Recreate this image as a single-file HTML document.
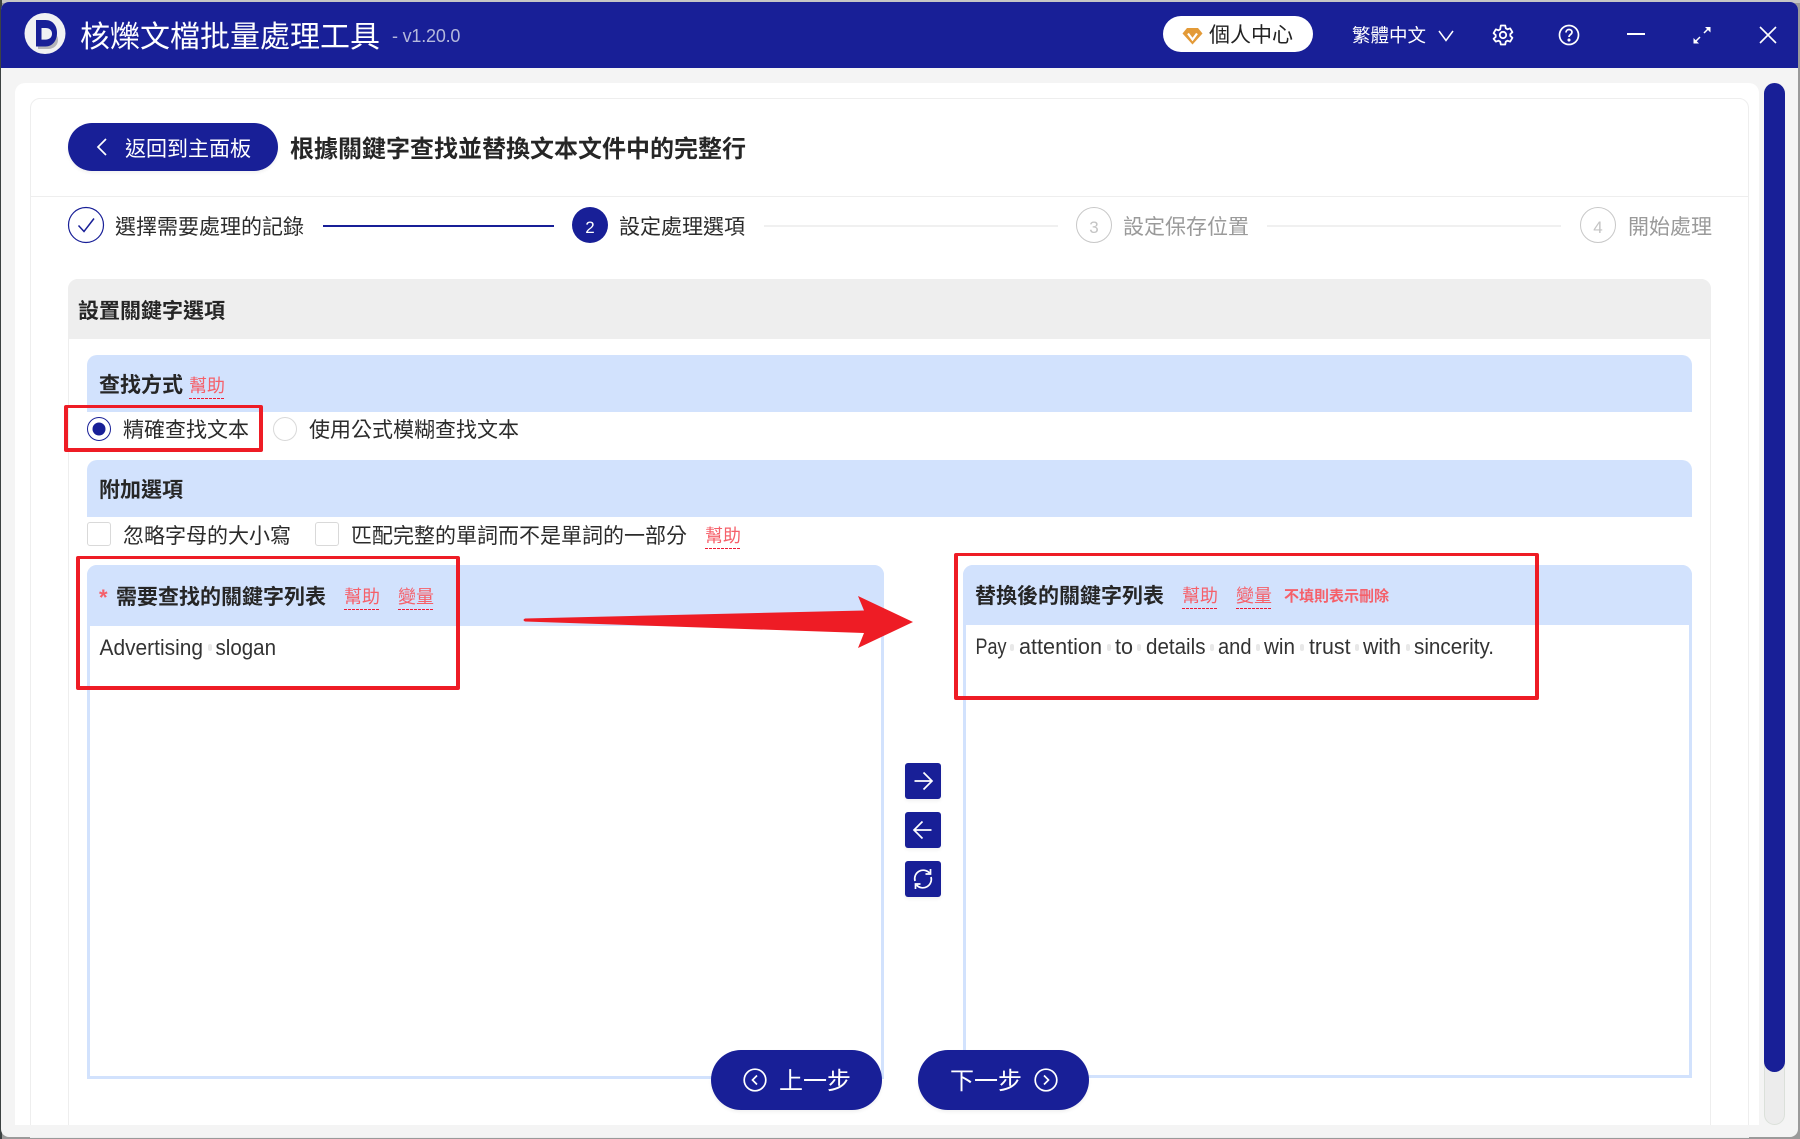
<!DOCTYPE html>
<html lang="zh-Hant"><head><meta charset="utf-8"><title>核爍文檔批量處理工具</title>
<style>
*{box-sizing:border-box}
html,body{margin:0;padding:0;width:1800px;height:1139px;overflow:hidden;background:#9a9a9a;font-family:"Liberation Sans","Noto Sans CJK TC",sans-serif}
.a{position:absolute}
.t{position:absolute;white-space:nowrap;line-height:30px;height:30px;font-size:21px;color:#2b2b2b;margin-top:2px}
.b{font-weight:700;color:#262626}
.h{position:absolute;white-space:nowrap;line-height:30px;height:30px;font-size:18px;color:#f5606a}
.u{position:absolute;height:1px;width:36px;background:repeating-linear-gradient(90deg,#ee1c35 0 3px,transparent 3px 4px)}
.blue{position:absolute;background:#d2e2fd}
.rb{position:absolute;border-style:solid;border-color:#ee1c25;border-width:3px 4px 4px;border-radius:2px}
.sq{position:absolute;left:905px;width:36px;height:36px;background:#181f97;border-radius:3px;box-shadow:0 2px 3px rgba(0,0,0,.06)}
.gr{color:#9a9a9a}
.d{position:absolute;width:4px;height:7px;border-radius:2px;background:#e8e8e8}
</style></head><body>
<div class="a" style="left:0;top:0;width:1800px;height:3px;background:#c6c6c6"></div>
<div class="a" style="left:0;top:0;width:2px;height:1139px;background:#3c4242"></div>
<div class="a" style="left:1px;top:2px;width:1797px;height:1135px;background:#f4f4f4;border-radius:8px;overflow:hidden">
 <div class="a" style="left:0;top:0;width:1797px;height:66px;background:#181f97"></div>
</div>

<!-- title bar -->
<svg class="a" style="left:24px;top:13px" width="42" height="41" viewBox="0 0 42 41">
 <circle cx="21" cy="20.500" r="20.500" fill="#f1f1f3"/>
 <path d="M14 18h10c6 0 10 4 10 9s-4 9-10 9H14z" fill="#b4b4b8"/>
 <path d="M12 7h9.500c7 0 11.500 5.500 11.500 13s-4.500 13.500-11.500 13.500H12z" fill="#181f97"/>
 <path d="M17.500 15h4c4 0 6.500 2.300 6.500 5.800s-2.500 5.800-6.500 5.800h-4z" fill="#f1f1f3"/>
</svg>
<div class="t" style="left:80px;top:21px;font-size:30px;color:#fff">核爍文檔批量處理工具</div>
<div class="t" style="left:392px;top:21px;font-size:18px;color:#b5b9dc;margin-top:0;letter-spacing:-.2px">- v1.20.0</div>

<div class="a" style="left:1163px;top:16px;width:150px;height:36px;background:#fff;border-radius:18px"></div>
<svg class="a" style="left:1182px;top:27px" width="21" height="18" viewBox="0 0 21 18">
 <path d="M5 1h11l4.500 5.500L10.500 17.500.5 6.500z" fill="#e39a37"/>
 <path d="M6 6.500l4.500 6 4.500-6" fill="none" stroke="#fff" stroke-width="2.200"/>
</svg>
<div class="t" style="left:1209px;top:20px;color:#222;margin-top:1px">個人中心</div>
<div class="t" style="left:1352px;top:20px;font-size:18.500px;color:#fff;margin-top:1px">繁體中文</div>
<svg class="a" style="left:1437px;top:29px" width="18" height="14" viewBox="0 0 18 14"><path d="M2 2l7 9.500L16 2" fill="none" stroke="#fff" stroke-width="1.500"/></svg>
<svg class="a" style="left:1492px;top:24px" width="22" height="22" viewBox="0 0 22 22" fill="none" stroke="#fff" stroke-width="1.800">
 <path d="M8.800 1.500h4.400l.6 2.800 1.700 1 2.700-.9 2.200 3.800-2.100 1.900v1.800l2.100 1.900-2.200 3.800-2.700-.9-1.700 1-.6 2.800H8.800l-.6-2.800-1.700-1-2.700.9L1.600 14.800l2.100-1.900v-1.800L1.600 9.200l2.200-3.800 2.700.9 1.700-1z" stroke-linejoin="round"/>
 <circle cx="11" cy="11" r="3.200"/>
</svg>
<svg class="a" style="left:1558px;top:24px" width="22" height="22" viewBox="0 0 22 22" fill="none" stroke="#fff" stroke-width="1.700">
 <circle cx="11" cy="11" r="9.500"/>
 <path d="M8 8.500c0-1.800 1.300-3 3-3s3 1.200 3 2.800c0 2.300-3 2.300-3 4.700"/>
 <circle cx="11" cy="16" r=".7" fill="#fff"/>
</svg>
<div class="a" style="left:1627px;top:33px;width:18px;height:2px;background:#fff"></div>
<svg class="a" style="left:1692px;top:25px" width="20" height="20" viewBox="0 0 20 20" fill="none" stroke="#fff" stroke-width="1.500">
 <path d="M12 8l5.500-5.500M8 12l-5.500 5.500"/>
 <path d="M13 2h5.500v5.500z" fill="#fff" stroke="none"/>
 <path d="M7 18.500H1.500V13z" fill="#fff" stroke="none"/>
</svg>
<svg class="a" style="left:1758px;top:25px" width="20" height="20" viewBox="0 0 20 20" fill="none" stroke="#fff" stroke-width="1.600"><path d="M2 2l16 16M18 2L2 18"/></svg>

<!-- main panel -->
<div class="a" style="left:15px;top:83px;width:1744px;height:1042px;background:#fff;border-radius:10px 10px 0 0"></div>
<div class="a" style="left:30px;top:98px;width:1719px;height:1040px;border:1px solid #eeeeee;border-radius:10px 10px 0 0"></div>
<div class="a" style="left:15px;top:1125px;width:1770px;height:12px;background:#f4f4f4"></div>
<div class="a" style="left:30px;top:196px;width:1719px;height:1px;background:#eeeeee"></div>

<!-- scrollbar -->
<div class="a" style="left:1764px;top:83px;width:21px;height:1042px;background:#ececec;border:1px solid #dbe0da;border-radius:11px"></div>
<div class="a" style="left:1764px;top:83px;width:21px;height:989px;background:#181f97;border-radius:11px"></div>

<!-- head -->
<div class="a" style="left:68px;top:123px;width:210px;height:48px;background:#181f97;border-radius:24px;box-shadow:0 2px 3px rgba(0,0,0,.06)"></div>
<svg class="a" style="left:94px;top:136px" width="16" height="22" viewBox="0 0 16 22"><path d="M12 3L4 11l8 8" fill="none" stroke="#fff" stroke-width="1.700"/></svg>
<div class="t" style="left:125px;top:134px;color:#fff;margin-top:1px">返回到主面板</div>
<div class="t b" style="left:290px;top:133px;font-size:24px">根據關鍵字查找並替換文本文件中的完整行</div>

<!-- steps -->
<svg class="a" style="left:67px;top:206px" width="38" height="38" viewBox="0 0 38 38" fill="none"><circle cx="19" cy="19" r="17.500" stroke="#181f97" stroke-width="1.200"/><path d="M11.500 19.500l5.500 6 10-13" stroke="#181f97" stroke-width="1.500"/></svg>
<div class="t" style="left:115px;top:211px">選擇需要處理的記錄</div>
<div class="a" style="left:323px;top:225px;width:231px;height:2px;background:#181f97"></div>
<div class="a" style="left:572px;top:207px;width:36px;height:36px;border-radius:50%;background:#181f97"></div>
<div class="t" style="left:572px;top:211px;width:36px;text-align:center;font-size:17px;color:#fff">2</div>
<div class="t" style="left:619px;top:211px">設定處理選項</div>
<div class="a" style="left:764px;top:225px;width:294px;height:2px;background:#f0f0f0"></div>
<div class="a" style="left:1076px;top:207px;width:36px;height:36px;border-radius:50%;border:1px solid #c8c8c8"></div>
<div class="t" style="left:1076px;top:211px;width:36px;text-align:center;font-size:17px;color:#c4c4c4">3</div>
<div class="t gr" style="left:1123px;top:211px">設定保存位置</div>
<div class="a" style="left:1267px;top:225px;width:294px;height:2px;background:#f0f0f0"></div>
<div class="a" style="left:1580px;top:207px;width:36px;height:36px;border-radius:50%;border:1px solid #c8c8c8"></div>
<div class="t" style="left:1580px;top:211px;width:36px;text-align:center;font-size:17px;color:#c4c4c4">4</div>
<div class="t gr" style="left:1628px;top:211px">開始處理</div>

<!-- section -->
<div class="a" style="left:68px;top:279px;width:1643px;height:859px;border:1px solid #eeeeee;border-radius:10px"></div>
<div class="a" style="left:15px;top:1125px;width:1749px;height:12px;background:#f4f4f4"></div>
<div class="a" style="left:68px;top:279px;width:1643px;height:60px;background:#eeeeee;border-radius:10px 10px 0 0"></div>
<div class="t b" style="left:78px;top:295px">設置關鍵字選項</div>

<div class="blue" style="left:87px;top:355px;width:1605px;height:57px;border-radius:10px 10px 0 0"></div>
<div class="t b" style="left:99px;top:370px;margin-top:1px">查找方式</div>
<div class="h" style="left:189px;top:371px">幫助</div><div class="u" style="left:189px;top:398px"></div>

<svg class="a" style="left:86px;top:416px" width="26" height="26" viewBox="0 0 26 26"><circle cx="13" cy="13" r="11.500" fill="#fff" stroke="#181f97" stroke-width="1"/><circle cx="13" cy="13" r="6.500" fill="#181f97"/></svg>
<div class="t" style="left:123px;top:414px">精確查找文本</div>
<div class="a" style="left:273px;top:417px;width:24px;height:24px;border-radius:50%;border:1px solid #d9d9d9"></div>
<div class="t" style="left:309px;top:414px">使用公式模糊查找文本</div>

<div class="blue" style="left:87px;top:460px;width:1605px;height:57px;border-radius:10px 10px 0 0"></div>
<div class="t b" style="left:99px;top:475px;margin-top:1px">附加選項</div>

<div class="a" style="left:87px;top:522px;width:24px;height:24px;border:1px solid #d9d9d9;border-radius:3px"></div>
<div class="t" style="left:123px;top:520px">忽略字母的大小寫</div>
<div class="a" style="left:315px;top:522px;width:24px;height:24px;border:1px solid #d9d9d9;border-radius:3px"></div>
<div class="t" style="left:351px;top:520px">匹配完整的單詞而不是單詞的一部分</div>
<div class="h" style="left:705px;top:521px">幫助</div><div class="u" style="left:705px;top:548px"></div>

<!-- left panel -->
<div class="a" style="left:87px;top:565px;width:797px;height:514px;border:3px solid #d2e2fd;border-radius:10px 10px 0 0"></div>
<div class="blue" style="left:87px;top:565px;width:797px;height:61px;border-radius:10px 10px 0 0"></div>
<div class="t" style="left:99px;top:581px;color:#f5606a;font-weight:700;font-size:22px">*</div>
<div class="t b" style="left:116px;top:581px">需要查找的關鍵字列表</div>
<div class="h" style="left:344px;top:582px">幫助</div><div class="u" style="left:344px;top:609px"></div>
<div class="h" style="left:398px;top:582px">變量</div><div class="u" style="left:398px;top:609px"></div>
<svg class="a" style="left:0;top:0" width="1800" height="1139" font-size="22" fill="#333" font-family="Liberation Sans, sans-serif">
 <text x="99.500" y="655" textLength="103.500" lengthAdjust="spacingAndGlyphs">Advertising</text>
 <text x="215.500" y="655" textLength="60.500" lengthAdjust="spacingAndGlyphs">slogan</text>
 <text x="975.500" y="654" textLength="31" lengthAdjust="spacingAndGlyphs">Pay</text>
 <text x="1019" y="654" textLength="83" lengthAdjust="spacingAndGlyphs">attention</text>
 <text x="1115" y="654" textLength="18" lengthAdjust="spacingAndGlyphs">to</text>
 <text x="1146" y="654" textLength="59.500" lengthAdjust="spacingAndGlyphs">details</text>
 <text x="1218" y="654" textLength="33.500" lengthAdjust="spacingAndGlyphs">and</text>
 <text x="1264" y="654" textLength="31" lengthAdjust="spacingAndGlyphs">win</text>
 <text x="1309" y="654" textLength="41.500" lengthAdjust="spacingAndGlyphs">trust</text>
 <text x="1363" y="654" textLength="38" lengthAdjust="spacingAndGlyphs">with</text>
 <text x="1414" y="654" textLength="80" lengthAdjust="spacingAndGlyphs">sincerity.</text>
</svg>
<div class="d" style="left:208px;top:644px"></div>
<div class="d" style="left:1010px;top:644px"></div>
<div class="d" style="left:1107px;top:644px"></div>
<div class="d" style="left:1137px;top:644px"></div>
<div class="d" style="left:1210px;top:644px"></div>
<div class="d" style="left:1256px;top:644px"></div>
<div class="d" style="left:1300px;top:644px"></div>
<div class="d" style="left:1355px;top:644px"></div>
<div class="d" style="left:1406px;top:644px"></div>

<!-- right panel -->
<div class="a" style="left:963px;top:565px;width:729px;height:513px;border:3px solid #d2e2fd;border-radius:10px 10px 0 0"></div>
<div class="blue" style="left:963px;top:565px;width:729px;height:60px;border-radius:10px 10px 0 0"></div>
<div class="t b" style="left:975px;top:580px">替換後的關鍵字列表</div>
<div class="h" style="left:1182px;top:581px">幫助</div><div class="u" style="left:1182px;top:608px"></div>
<div class="h" style="left:1236px;top:581px">變量</div><div class="u" style="left:1236px;top:608px"></div>
<div class="h" style="left:1284px;top:582px;font-size:15px;font-weight:700">不填則表示刪除</div>

<!-- mid buttons -->
<div class="sq" style="top:763px"></div>
<svg class="a" style="left:905px;top:763px" width="36" height="36" viewBox="0 0 36 36" fill="none" stroke="#fff" stroke-width="1.700"><path d="M9.500 18h17M18.500 9.500L27 18l-8.500 8.500"/></svg>
<div class="sq" style="top:812px"></div>
<svg class="a" style="left:905px;top:812px" width="36" height="36" viewBox="0 0 36 36" fill="none" stroke="#fff" stroke-width="1.700"><path d="M26.500 18h-17M17.500 9.500L9 18l8.500 8.500"/></svg>
<div class="sq" style="top:861px"></div>
<svg class="a" style="left:905px;top:861px" width="36" height="36" viewBox="0 0 36 36" fill="none" stroke="#fff" stroke-width="1.700"><path d="M10 20a8.500 8.500 0 0 1 14.500-8M26 16a8.500 8.500 0 0 1-14.500 8"/><path d="M25.500 8v5h-5M10.500 28v-5h5"/></svg>

<!-- bottom buttons -->
<div class="a" style="left:711px;top:1050px;width:171px;height:60px;background:#181f97;border-radius:30px;box-shadow:0 2px 3px rgba(0,0,0,.06)"></div>
<svg class="a" style="left:743px;top:1068px" width="24" height="24" viewBox="0 0 24 24" fill="none" stroke="#fff" stroke-width="1.700"><circle cx="12" cy="12" r="10.800"/><path d="M14 7.500L9.500 12l4.500 4.500"/></svg>
<div class="t" style="left:779px;top:1065px;font-size:24px;color:#fff">上一步</div>
<div class="a" style="left:918px;top:1050px;width:171px;height:60px;background:#181f97;border-radius:30px;box-shadow:0 2px 3px rgba(0,0,0,.06)"></div>
<div class="t" style="left:950px;top:1065px;font-size:24px;color:#fff">下一步</div>
<svg class="a" style="left:1034px;top:1068px" width="24" height="24" viewBox="0 0 24 24" fill="none" stroke="#fff" stroke-width="1.700"><circle cx="12" cy="12" r="10.800"/><path d="M10 7.500l4.500 4.500-4.500 4.500"/></svg>

<!-- annotations -->
<div class="rb" style="left:64px;top:405px;width:199px;height:47px"></div>
<div class="rb" style="left:76px;top:556px;width:384px;height:134px"></div>
<div class="rb" style="left:954px;top:553px;width:585px;height:147px"></div>
<svg class="a" style="left:0;top:0" width="1800" height="1139"><path d="M525 618.500L864 610.500 858 596 913 622 858 648 864 633 525 621.500Q522 620 525 618.500z" fill="#ee1c25"/></svg>
</body></html>
